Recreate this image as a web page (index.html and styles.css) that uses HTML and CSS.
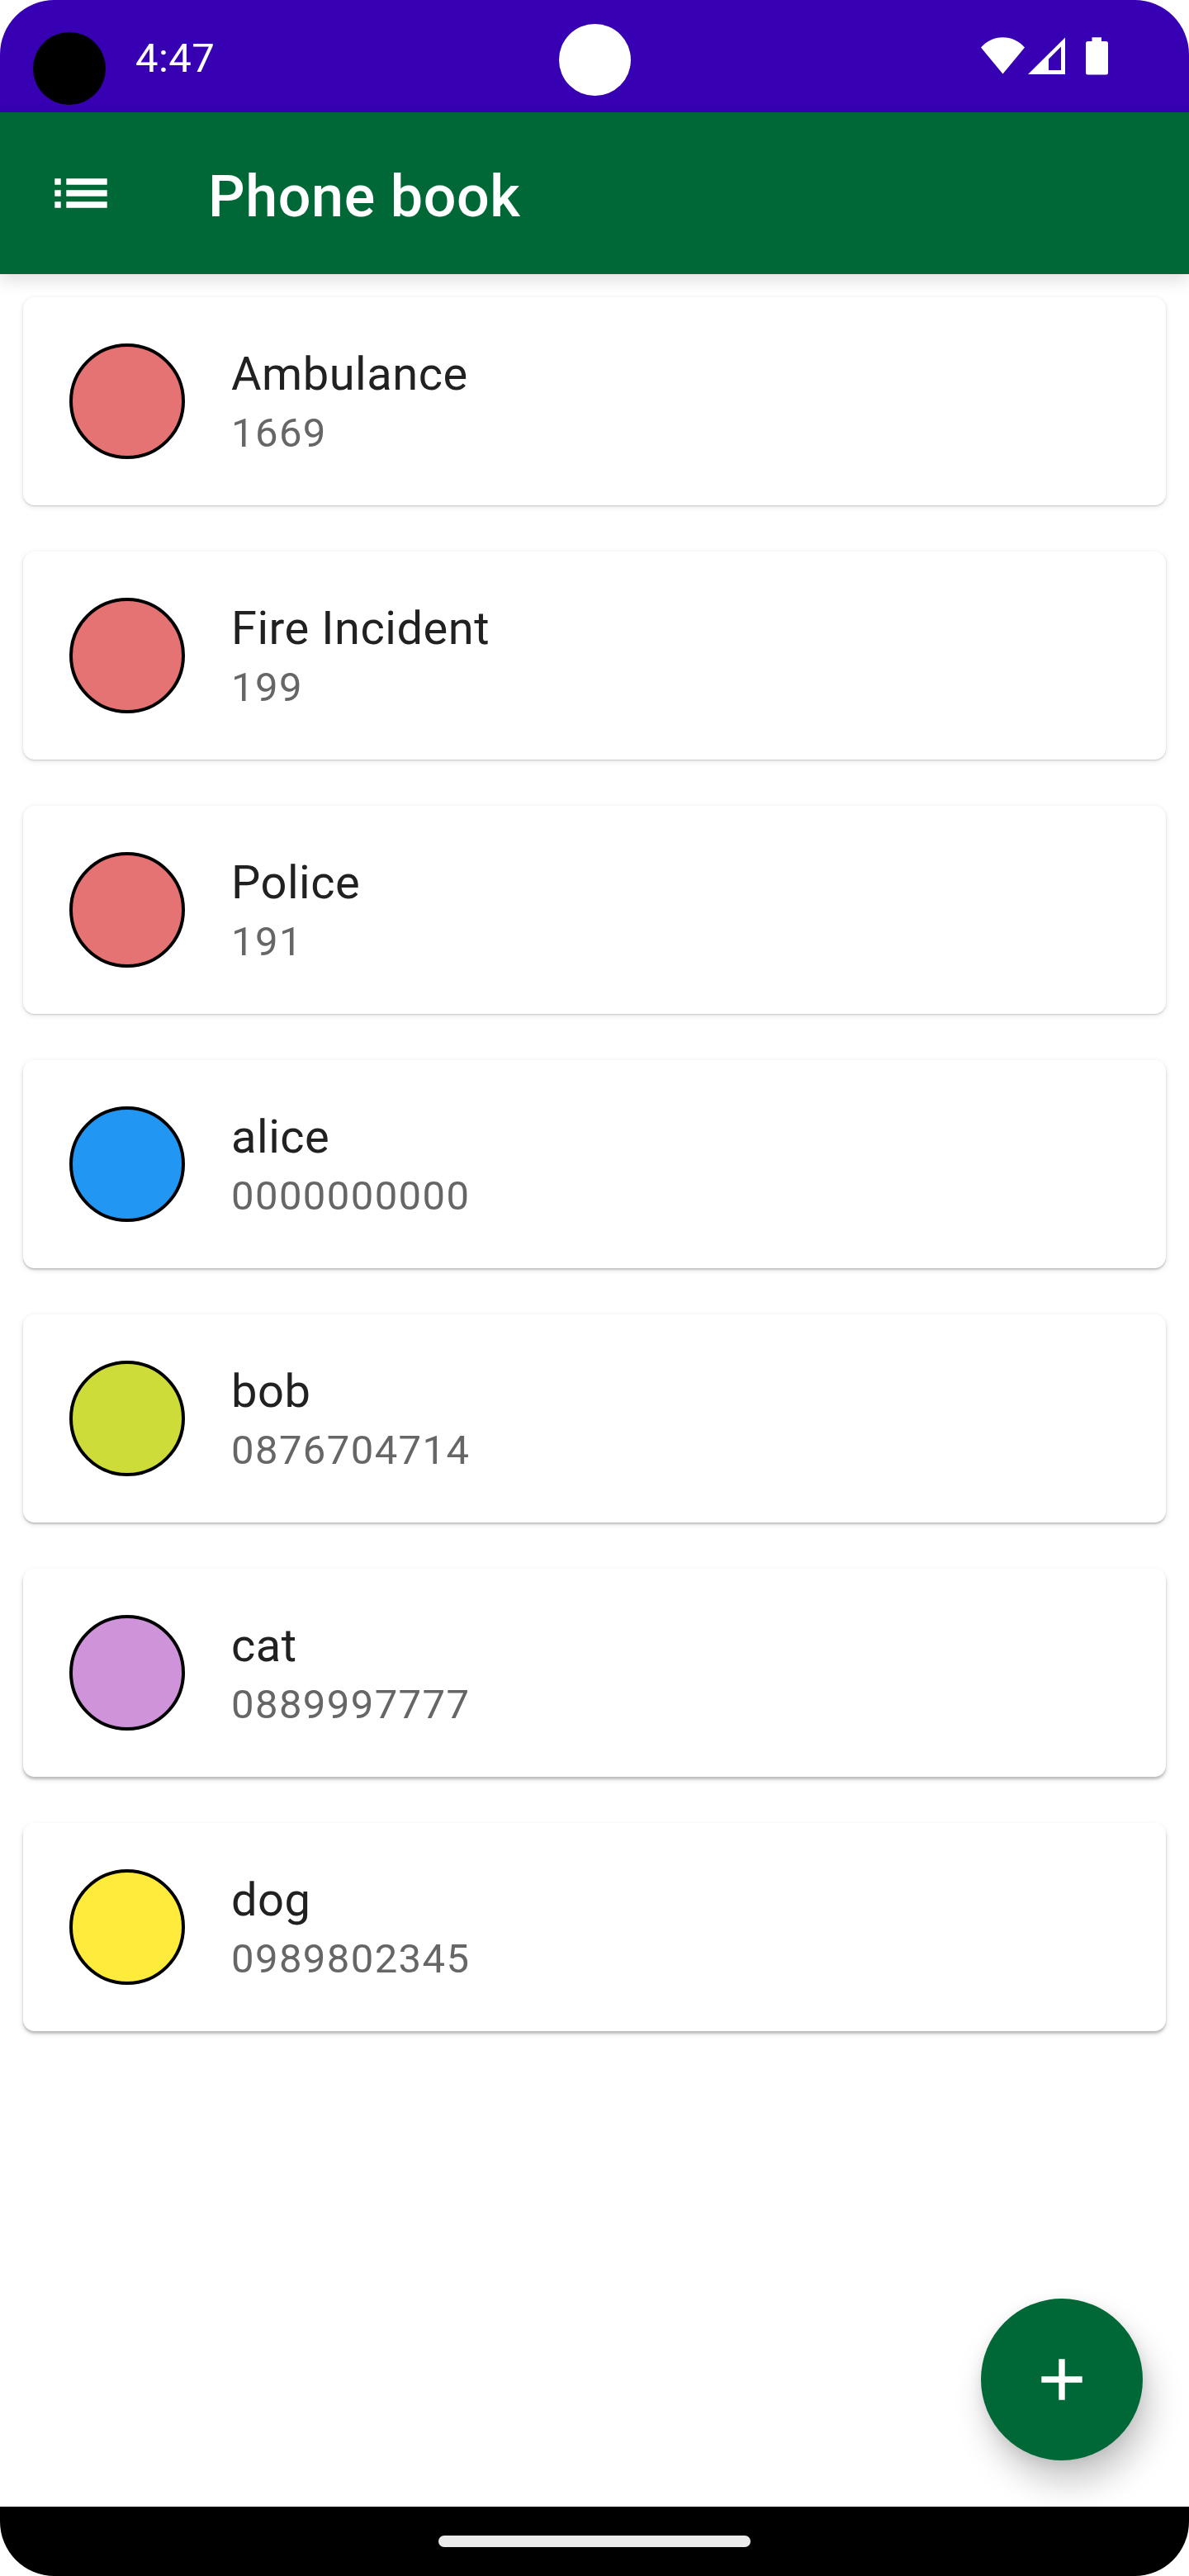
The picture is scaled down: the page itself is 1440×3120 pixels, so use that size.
FILE: index.html
```html
<!DOCTYPE html>
<html lang="en">
<head>
<meta charset="utf-8">
<title>Phone book</title>
<link rel="stylesheet" href="styles.css">
</head>
<body>
<div class="screen">
  <div class="status-bar">
    <span class="touch-dot"></span>
    <span class="clock">4:47</span>
    <span class="camera"></span>
    <svg class="status-icons" width="155" height="46" viewBox="0 0 155 46">
      <path fill="#fff" d="M0 12.5C7 4.5 16 .2 26.500 .2S46 4.500 53 12.500L26.500 44.500z"/>
      <path fill="#fff" fill-rule="evenodd" d="M57 45 102 .5V45zM82 26.500V40H97V11.500z"/>
      <path fill="#fff" d="M134.500 .2h11.500V5h5.500q2.500 0 2.500 2.500v35.500q0 2.500-2.500 2.500h-22q-2.500 0-2.500-2.500V7.500q0-2.500 2.500-2.500h5z"/>
    </svg>
  </div>
  <header class="app-bar">
    <svg class="menu-icon" width="64" height="36" viewBox="0 0 64 36">
      <path fill="#fff" d="M.3 .3H7.700V7.700H.3zM14.300 .3H63.700V7.700H14.300zM.3 14.300H7.700V21.700H.3zM14.300 14.300H63.700V21.700H14.300zM.3 28.300H7.700V35.700H.3zM14.300 28.300H63.700V35.700H14.300z"/>
    </svg>
    <h1 class="title">Phone book</h1>
  </header>
  <main class="contacts">
    <article class="card"><span class="avatar red"></span><div class="info"><div class="name">Ambulance</div><div class="phone">1669</div></div></article>
    <article class="card"><span class="avatar red"></span><div class="info"><div class="name">Fire Incident</div><div class="phone">199</div></div></article>
    <article class="card"><span class="avatar red"></span><div class="info"><div class="name">Police</div><div class="phone">191</div></div></article>
    <article class="card"><span class="avatar blue"></span><div class="info"><div class="name">alice</div><div class="phone">0000000000</div></div></article>
    <article class="card"><span class="avatar lime"></span><div class="info"><div class="name">bob</div><div class="phone">0876704714</div></div></article>
    <article class="card"><span class="avatar purple"></span><div class="info"><div class="name">cat</div><div class="phone">0889997777</div></div></article>
    <article class="card"><span class="avatar yellow"></span><div class="info"><div class="name">dog</div><div class="phone">0989802345</div></div></article>
    <button class="fab" aria-label="Add contact">
      <svg width="50" height="50" viewBox="0 0 50 50"><path fill="#fff" d="M21.300 .3h7.400v21h21v7.400h-21v21h-7.400v-21H.3v-7.400h21z"/></svg>
    </button>
  </main>
  <footer class="nav-bar"><span class="pill"></span></footer>
</div>
</body>
</html>
```
FILE: styles.css
```css
* { box-sizing: border-box; }
body { margin: 0; background: #fff; font-family: Roboto, "Noto Sans", sans-serif; }
.screen {
  width: 1440px; height: 3120px; overflow: hidden; border-radius: 66px;
  display: flex; flex-direction: column; background: #fff;
}
.status-bar {
  position: relative; height: 136px; flex: none; background: #3700b3;
  display: flex; align-items: flex-start; justify-content: space-between;
  padding: 0 97px 0 40px;
}
.touch-dot { width: 88px; height: 88px; margin-top: 39px; border-radius: 50%; background: #000; }
.clock {
  flex: 1; margin: 42px 0 0 36px; color: #fff;
  font-size: 49px; line-height: 57px; letter-spacing: .4px;
}
.camera {
  position: absolute; left: 677px; top: 29px; width: 87px; height: 87px;
  border-radius: 50%; background: #fff;
}
.status-icons { margin-top: 45px; display: block; }
.app-bar {
  position: relative; z-index: 1; height: 196px; flex: none; background: #006837;
  display: flex; align-items: flex-start; padding: 0 66px;
  box-shadow: 0 7px 20px rgba(0, 0, 0, .13);
}
.menu-icon { display: block; margin-top: 80px; }
.title {
  margin: 61px 0 0 122px; color: #fff;
  font-size: 70px; line-height: 82px; font-weight: 500; letter-spacing: .6px;
}
.contacts {
  position: relative; flex: 1; padding: 28px;
  display: flex; flex-direction: column; gap: 56px;
}
.card {
  height: 252px; flex: none; border-radius: 14px; background: #fff;
  display: flex; gap: 56px; padding: 56px;
  box-shadow: 0 1px 2px rgba(0, 0, 0, .16), 0 2px 7px rgba(0, 0, 0, .1);
}
.card:nth-child(n+4) { box-shadow: 0 2px 2px rgba(0, 0, 0, .18), 0 2px 7px rgba(0, 0, 0, .12); }
.card:nth-child(n+6) { box-shadow: 0 3px 3px rgba(0, 0, 0, .19), 0 3px 7px rgba(0, 0, 0, .12); }
.avatar { width: 140px; height: 140px; flex: none; border: 4px solid #000; border-radius: 50%; }
.red { background: #e57373; }
.blue { background: #2196f3; }
.lime { background: #cddc39; }
.purple { background: #ce93d8; }
.yellow { background: #ffeb3b; }
.info { display: flex; flex-direction: column; padding-top: 4px; }
.name { font-size: 56px; line-height: 66px; letter-spacing: .525px; color: #212121; }
.phone { margin-top: 10px; font-size: 49px; line-height: 58px; letter-spacing: 1.4px; color: #666; }
.fab {
  position: absolute; right: 56px; bottom: 56px; width: 196px; height: 196px;
  border: 0; padding: 0; border-radius: 50%; background: #006837;
  display: flex; align-items: center; justify-content: center;
  box-shadow: 8px 26px 40px rgba(0, 0, 0, .22), 0 4px 16px rgba(0, 0, 0, .08);
}
.nav-bar {
  position: relative; height: 84px; flex: none; background: #000;
  display: flex; align-items: center; justify-content: center;
}
.pill { width: 378px; height: 14px; border-radius: 7px; background: #ebebeb; }
```
